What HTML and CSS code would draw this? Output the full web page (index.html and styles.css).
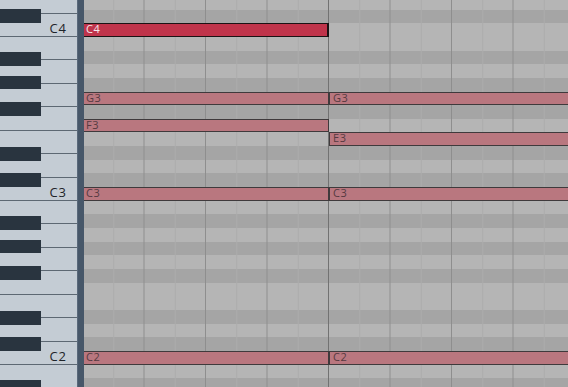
FILE: index.html
```html
<!DOCTYPE html>
<html lang="en">

<head>
  <meta charset="UTF-8" />
  <meta name="viewport" content="width=device-width, initial-scale=1.0" />
  <title>Piano Roll</title>
  <link rel="stylesheet" href="styles.css">
</head>

<body>
  <div class="roll">
    <!-- keyboard, one block per octave (C4 down to C1) -->
    <div class="keyboard">
      <div class="octave">
        <div class="white-key"></div>
        <div class="white-key"></div>
        <div class="white-key"></div>
        <div class="white-key"></div>
        <div class="white-key"></div>
        <div class="white-key"></div>
        <div class="white-key"><span>C4</span></div>
        <div class="black-key as"></div>
        <div class="black-key gs"></div>
        <div class="black-key fs"></div>
        <div class="black-key ds"></div>
        <div class="black-key cs"></div>
      </div>
      <div class="octave">
        <div class="white-key"></div>
        <div class="white-key"></div>
        <div class="white-key"></div>
        <div class="white-key"></div>
        <div class="white-key"></div>
        <div class="white-key"></div>
        <div class="white-key"><span>C3</span></div>
        <div class="black-key as"></div>
        <div class="black-key gs"></div>
        <div class="black-key fs"></div>
        <div class="black-key ds"></div>
        <div class="black-key cs"></div>
      </div>
      <div class="octave">
        <div class="white-key"></div>
        <div class="white-key"></div>
        <div class="white-key"></div>
        <div class="white-key"></div>
        <div class="white-key"></div>
        <div class="white-key"></div>
        <div class="white-key"><span>C2</span></div>
        <div class="black-key as"></div>
        <div class="black-key gs"></div>
        <div class="black-key fs"></div>
        <div class="black-key ds"></div>
        <div class="black-key cs"></div>
      </div>
      <div class="octave">
        <div class="white-key"></div>
        <div class="white-key"></div>
        <div class="white-key"></div>
        <div class="white-key"></div>
        <div class="white-key"></div>
        <div class="white-key"></div>
        <div class="white-key"></div>
        <div class="black-key as"></div>
        <div class="black-key gs"></div>
        <div class="black-key fs"></div>
        <div class="black-key ds"></div>
        <div class="black-key cs"></div>
      </div>
    </div>

    <div class="divider"></div>

    <!-- note lanes, B down to C in each octave -->
    <div class="grid">
      <div class="lanes">
        <div class="lane"></div>
        <div class="lane sharp"></div>
        <div class="lane"></div>
        <div class="lane sharp"></div>
        <div class="lane"></div>
        <div class="lane sharp"></div>
        <div class="lane"></div>
        <div class="lane"></div>
        <div class="lane sharp"></div>
        <div class="lane"></div>
        <div class="lane sharp"></div>
        <div class="lane">
          <div class="note first selected">C4</div>
        </div>
      </div>
      <div class="lanes">
        <div class="lane"></div>
        <div class="lane sharp"></div>
        <div class="lane"></div>
        <div class="lane sharp"></div>
        <div class="lane">
          <div class="note first">G3</div>
          <div class="note">G3</div>
        </div>
        <div class="lane sharp"></div>
        <div class="lane">
          <div class="note first">F3</div>
        </div>
        <div class="lane">
          <div class="note late">E3</div>
        </div>
        <div class="lane sharp"></div>
        <div class="lane"></div>
        <div class="lane sharp"></div>
        <div class="lane">
          <div class="note first">C3</div>
          <div class="note">C3</div>
        </div>
      </div>
      <div class="lanes">
        <div class="lane"></div>
        <div class="lane sharp"></div>
        <div class="lane"></div>
        <div class="lane sharp"></div>
        <div class="lane"></div>
        <div class="lane sharp"></div>
        <div class="lane"></div>
        <div class="lane"></div>
        <div class="lane sharp"></div>
        <div class="lane"></div>
        <div class="lane sharp"></div>
        <div class="lane">
          <div class="note first">C2</div>
          <div class="note">C2</div>
        </div>
      </div>
      <div class="lanes">
        <div class="lane"></div>
        <div class="lane sharp"></div>
        <div class="lane"></div>
        <div class="lane sharp"></div>
        <div class="lane"></div>
        <div class="lane sharp"></div>
        <div class="lane"></div>
        <div class="lane"></div>
        <div class="lane sharp"></div>
        <div class="lane"></div>
        <div class="lane sharp"></div>
        <div class="lane"></div>
      </div>
    </div>
  </div>
</body>

</html>
```

FILE: styles.css
```css
* {
  box-sizing: border-box;
  margin: 0;
  padding: 0;
}

body {
  background-color: #b5b5b5;
  font-family: "Open Sans", "Noto Sans", sans-serif;
  overflow: hidden;
}

.roll {
  display: flex;
  height: 387px;
  overflow: hidden;
}

/* keyboard */

.keyboard {
  width: 77px;
  flex: none;
  margin-top: -127px;
  background-color: #c4ccd4;
}

.octave {
  position: relative;
  height: 164px;
  display: flex;
  flex-direction: column;
}

.white-key {
  height: calc(164px / 7);
  flex: none;
  border-bottom: 1px solid #5d6873;
  display: flex;
  justify-content: flex-end;
  align-items: flex-end;
  padding-right: 10px;
  font-size: 13px;
  line-height: 16px;
  letter-spacing: 1px;
  color: #1e2429;
}

.black-key {
  position: absolute;
  left: 0;
  width: 41px;
  height: 13.5px;
  background-color: #29343f;
}

.as { top: 15px; }
.gs { top: 38.5px; }
.fs { top: 65px; }
.ds { top: 110px; }
.cs { top: 136px; }

.divider {
  width: 7px;
  flex: none;
  background-color: #475769;
  border-left: 1px solid #5a697b;
}

/* note grid */

.grid {
  flex: 1;
  margin-top: -127px;
  overflow: hidden;
}

.lane {
  display: flex;
  height: calc(164px / 12);
  background-color: #b5b5b5;
  background-image:
    linear-gradient(to right, #727272 0 1px, transparent 1px),
    linear-gradient(to right, #8e8e8e 0 1px, transparent 1px),
    linear-gradient(to right, #acacac 0 1px, transparent 1px);
  background-size: 246px 100%, 61.5px 100%, 61.5px 100%;
  background-position: -2px 0, -2px 0, 29.25px 0;
}

.lane.sharp {
  background-color: #a5a5a5;
}

.note {
  flex: none;
  width: 246px;
  height: 100%;
  border: 1px solid #3f3a3c;
  background-color: #b9777f;
  color: #563a41;
  font-size: 11px;
  line-height: 10px;
  letter-spacing: 0.6px;
  padding-left: 3px;
  white-space: nowrap;
}

.note.first {
  margin-left: -2px;
  width: 247px;
}

.note.late {
  margin-left: 245px;
}

.note.selected {
  background-color: #c0344b;
  border-color: #1b1214;
  border-right-width: 2px;
  color: #f6e8eb;
}
```
